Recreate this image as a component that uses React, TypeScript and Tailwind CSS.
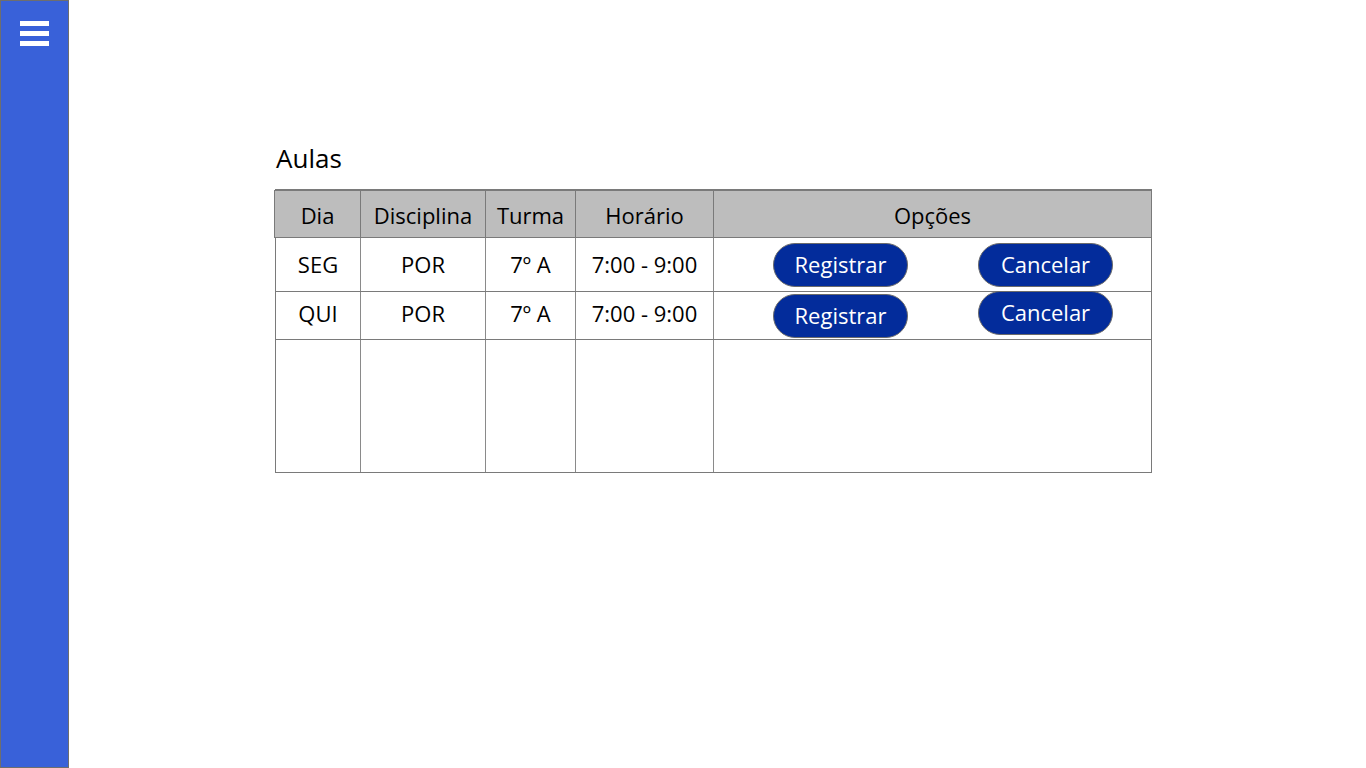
const rows = [
  { dia: 'SEG', disciplina: 'POR', turma: '7º A', horario: '7:00 - 9:00' },
  { dia: 'QUI', disciplina: 'POR', turma: '7º A', horario: '7:00 - 9:00' },
]

const font = { fontFamily: '"Open Sans", "Noto Sans", sans-serif' }

function Button({ label, shift }: { label: string; shift: string }) {
  return (
    <button
      className={`flex h-[44px] w-[135px] items-center justify-center rounded-full border border-[#6b6b6b] bg-[#032c9b] text-[22px] text-white ${shift}`}
    >
      {label}
    </button>
  )
}

export default function App() {
  return (
    <div className="flex h-[768px] w-full bg-white text-black" style={font}>
      <aside className="flex w-[69px] shrink-0 flex-col items-center border border-[#6e6e6e] bg-[#3961d9] pt-[20px]">
        <div className="flex flex-col gap-[5px]">
          <span className="block h-[5px] w-[29px] bg-white" />
          <span className="block h-[5px] w-[29px] bg-white" />
          <span className="block h-[5px] w-[29px] bg-white" />
        </div>
      </aside>

      <main className="flex flex-1 flex-col pl-[206px] pt-[140px]">
        <h1 className="ml-[1px] text-[26px] leading-[36px]">Aulas</h1>
        <div className="mt-[13px] w-[877px] border-t border-[#7a7a7a]">
          <div className="-ml-[1px] flex h-[48px] border border-[#7a7a7a] bg-[#bdbdbd] text-[22px]">
            <div className="flex w-[86px] items-center justify-center border-r border-[#7a7a7a] pt-[2px]">Dia</div>
            <div className="flex w-[125px] items-center justify-center border-r border-[#7a7a7a] pt-[2px]">Disciplina</div>
            <div className="flex w-[90px] items-center justify-center border-r border-[#7a7a7a] pt-[2px]">Turma</div>
            <div className="flex w-[138px] items-center justify-center border-r border-[#7a7a7a] pt-[2px]">Horário</div>
            <div className="flex flex-1 items-center justify-center pt-[2px]">Opções</div>
          </div>
          {rows.map((r, i) => {
            const cell = `flex items-center justify-center border-r border-[#8a8a8a] ${i === 0 ? '' : 'pb-[5px]'}`
            return (
              <div
                key={i}
                className={`flex border-x border-b border-[#7a7a7a] text-[22px] ${i === 0 ? 'h-[54px]' : 'h-[48px]'}`}
              >
                <div className={`w-[85px] ${cell}`}>{r.dia}</div>
                <div className={`w-[125px] ${cell}`}>{r.disciplina}</div>
                <div className={`w-[90px] ${cell}`}>{r.turma}</div>
                <div className={`w-[138px] ${cell}`}>{r.horario}</div>
                <div className="flex flex-1 items-center gap-[70px] pl-[59px]">
                  <Button label="Registrar" shift="" />
                  <Button label="Cancelar" shift={i === 0 ? '' : '-translate-y-[3px]'} />
                </div>
              </div>
            )
          })}
          <div className="flex h-[133px] border-x border-b border-[#7a7a7a]">
            <div className="w-[85px] border-r border-[#8a8a8a]" />
            <div className="w-[125px] border-r border-[#8a8a8a]" />
            <div className="w-[90px] border-r border-[#8a8a8a]" />
            <div className="w-[138px] border-r border-[#8a8a8a]" />
            <div className="flex-1" />
          </div>
        </div>
      </main>
    </div>
  )
}
